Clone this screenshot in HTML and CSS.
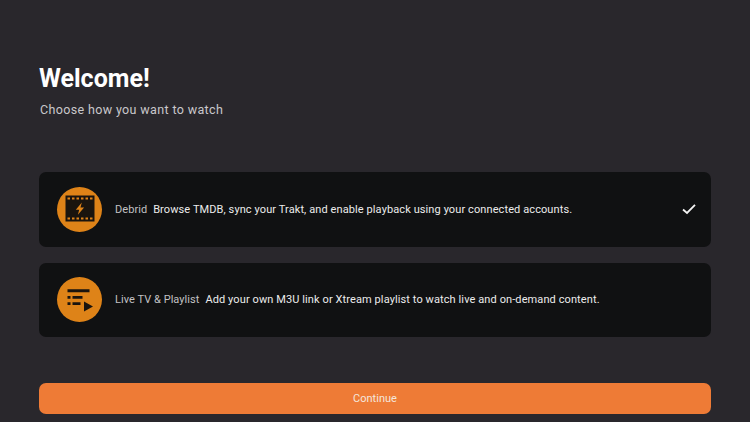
FILE: index.html
```html
<!DOCTYPE html>
<html lang="en">
<head>
<meta charset="utf-8">
<title>Welcome</title>
<link rel="stylesheet" href="styles.css">
</head>
<body>
<main class="page">
  <header class="head">
    <h1 class="title">Welcome!</h1>
    <p class="subtitle">Choose how you want to watch</p>
  </header>
  <section class="options">
    <div class="option">
      <span class="badge">
        <svg class="icon" width="30" height="30" viewBox="0 0 30 30">
          <path fill="#1a140e" fill-rule="evenodd" d="M0.500 1.500h29v26h-29zM2.500 3.500v2h2.500v-2zM7 3.500v2h2.500v-2zM11.500 3.500v2h2.500v-2zM16 3.500v2h2.500v-2zM20.500 3.500v2h2.500v-2zM25 3.500v2h2.500v-2zM2.500 23.500v2h2.500v-2zM7 23.500v2h2.500v-2zM11.500 23.500v2h2.500v-2zM16 23.500v2h2.500v-2zM20.500 23.500v2h2.500v-2zM25 23.500v2h2.500v-2z"/>
          <path fill="#de8318" d="M16.800 8.500l-6 7.300h3.400l-1.300 5 6.200-7.400h-3.600z"/>
        </svg>
      </span>
      <span class="label">Debrid</span>
      <span class="desc">Browse TMDB, sync your Trakt, and enable playback using your connected accounts.</span>
      <svg class="check" width="16" height="16" viewBox="0 0 16 16"><path fill="none" stroke="#f4f4f4" stroke-width="1.800" d="M2 8.500l4 3.500L14 3.800"/></svg>
    </div>
    <div class="option">
      <span class="badge">
        <svg class="icon" width="30" height="30" viewBox="0 0 30 30">
          <path fill="#1a140e" d="M2.500 4.300h22v3h-22zM2.500 11h3v2.800h-3zM7.500 11h10v2.800h-10zM2.500 17.200h3V20h-3zM7.500 17.200h8V20h-8zM19 16.500l9 5-9 5z"/>
        </svg>
      </span>
      <span class="label">Live TV &amp; Playlist</span>
      <span class="desc">Add your own M3U link or Xtream playlist to watch live and on-demand content.</span>
    </div>
  </section>
  <button class="continue" type="button">Continue</button>
</main>
</body>
</html>
```
FILE: styles.css
```css
* { box-sizing: border-box; }
html, body { margin: 0; height: 100%; }
body {
  background: #29272c;
  font-family: Roboto, "Liberation Sans", sans-serif;
  overflow: hidden;
}
.page {
  height: 422px;
  padding: 64px 39px 0;
  display: flex;
  flex-direction: column;
}
.title {
  margin: 0;
  font-size: 25px;
  line-height: 29px;
  font-weight: 700;
  color: #fff;
}
.subtitle {
  margin: 9px 0 0 1px;
  font-size: 12.500px;
  line-height: 15px;
  letter-spacing: 0.36px;
  color: #c9c8cb;
}
.options {
  margin-top: 55px;
  display: flex;
  flex-direction: column;
  gap: 16px;
}
.option {
  height: 74.500px;
  padding: 0 14px 0 18px;
  display: flex;
  align-items: center;
  background: #101112;
  border-radius: 7px;
}
.badge {
  width: 45px;
  height: 45px;
  flex: none;
  border-radius: 50%;
  background: #de8318;
  display: flex;
  align-items: center;
  justify-content: center;
}
.label {
  margin-left: 13px;
  font-size: 11px;
  color: #c2c1c3;
  letter-spacing: 0.05px;
}
.desc {
  margin-left: 6px;
  font-size: 11px;
  color: #ececec;
  letter-spacing: 0.1px;
  flex: 1;
}
.check { flex: none; }
.continue {
  margin-top: 46px;
  height: 31px;
  border: 0;
  border-radius: 7px;
  background: #ee7b36;
  color: #f4e6dc;
  font: 400 11px Roboto, "Liberation Sans", sans-serif;
}
```
